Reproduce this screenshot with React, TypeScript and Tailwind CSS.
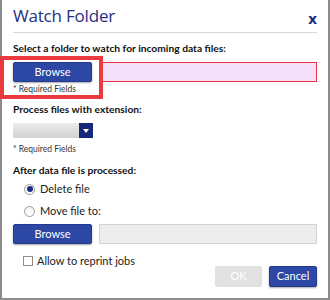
import React from 'react';

const font = "font-['Lato','Open_Sans',sans-serif]";

const RequiredNote = ({ className = '' }: { className?: string }) => (
  <div className={`text-[8.5px] leading-[10px] text-[#333] ${className}`}>* Required Fields</div>
);

const Radio = ({ label, checked = false, className = '' }: { label: string; checked?: boolean; className?: string }) => (
  <label className={`flex items-center gap-[5px] ml-[11px] h-[14px] ${className}`}>
    <span className="flex items-center justify-center w-[11px] h-[11px] rounded-full border border-[#9a9a9a] bg-gradient-to-b from-[#f4f4f4] to-white">
      {checked && <span className="w-[6px] h-[6px] rounded-full bg-[#1b2d84]" />}
    </span>
    <span className="text-[11px] leading-[14px] text-[#222]">{label}</span>
  </label>
);

const BlueButton = ({ children, className = '' }: { children: React.ReactNode; className?: string }) => (
  <button className={`flex items-center justify-center bg-[#2d47a5] border border-[#233b8f] rounded-[2px] text-white text-[11px] shadow-[0_1px_2px_rgba(0,0,0,0.35)] ${className}`}>
    {children}
  </button>
);

export default function App() {
  return (
    <div className={`relative w-[330px] h-[300px] bg-white border-x-2 border-b-2 border-[#8c8c8c] px-[11px] flex flex-col ${font}`}>
      <div className="flex items-center justify-between h-[33px] border-b border-[#d8d8d8]">
        <h1 className="font-['Open_Sans',sans-serif] text-[17px] leading-[20px] text-[#1f2f80] tracking-[-0.2px]">Watch Folder</h1>
        <span className="font-['Open_Sans',sans-serif] text-[15px] font-bold leading-none text-[#1b2b80] mt-[5px]">x</span>
      </div>

      <div className="mt-[8px] text-[10.25px] font-bold leading-[14px] text-[#111]">
        Select a folder to watch for incoming data files:
      </div>
      <div className="flex gap-[10px] mt-[7px]">
        <div className="w-[79px] shrink-0">
          <BlueButton className="w-[79px] h-[20px]">Browse</BlueButton>
          <RequiredNote className="mt-[2px]" />
        </div>
        <div className="flex-1 h-[20px] bg-[#f4e0fb] border border-[#e8353e]" />
      </div>

      <div className="mt-[8px] text-[10.25px] font-bold leading-[14px] text-[#111]">Process files with extension:</div>
      <div className="flex mt-[7px] w-[80px] h-[15px]">
        <div className="flex-1 bg-gradient-to-b from-[#ececec] to-[#d2d2d2]" />
        <div className="w-[14px] bg-[#15287a] flex items-center justify-center">
          <svg width="6" height="4" viewBox="0 0 6 4">
            <path d="M0 0h6L3 4z" fill="#fff" />
          </svg>
        </div>
      </div>
      <RequiredNote className="mt-[6px]" />

      <div className="mt-[9px] text-[10.25px] font-bold leading-[14px] text-[#111]">After data file is processed:</div>
      <Radio label="Delete file" checked className="mt-[5px]" />
      <Radio label="Move file to:" className="mt-[8px]" />

      <div className="flex gap-[7px] mt-[6px]">
        <BlueButton className="w-[79px] h-[20px] shrink-0">Browse</BlueButton>
        <div className="flex-1 h-[20px] bg-[#ececec] border border-[#d2d2d2]" />
      </div>

      <div className="flex justify-between mt-[10px]">
        <label className="flex items-center gap-[4px] ml-[10px] h-[14px] self-start">
          <span className="w-[10px] h-[10px] border border-[#8f8f8f] bg-white" />
          <span className="text-[11px] leading-[14px] text-[#222]">Allow to reprint jobs</span>
        </label>
        <div className="flex gap-[7px] mt-[12px]">
          <button className="w-[47px] h-[21px] bg-[#e1e1e1] rounded-[2px] text-white text-[11px]">OK</button>
          <BlueButton className="w-[48px] h-[21px]">Cancel</BlueButton>
        </div>
      </div>

      <div className="absolute left-[-2px] top-[56px] w-[103px] h-[43px] border-[4px] border-[#ea3a3f]" />
    </div>
  );
}
